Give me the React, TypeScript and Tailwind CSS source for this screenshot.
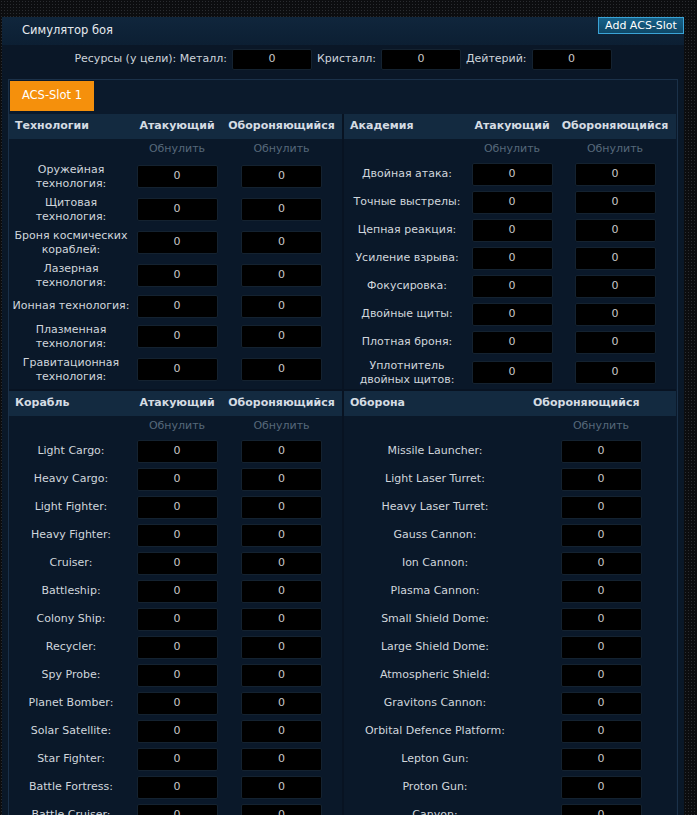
import React from 'react';

const font = "font-['DejaVu_Sans',Verdana,sans-serif]";

const tech: string[][] = [
  ['Оружейная', 'технология:'],
  ['Щитовая', 'технология:'],
  ['Броня космических', 'кораблей:'],
  ['Лазерная', 'технология:'],
  ['Ионная технология:'],
  ['Плазменная', 'технология:'],
  ['Гравитационная', 'технология:'],
];

const academy: string[][] = [
  ['Двойная атака:'],
  ['Точные выстрелы:'],
  ['Цепная реакция:'],
  ['Усиление взрыва:'],
  ['Фокусировка:'],
  ['Двойные щиты:'],
  ['Плотная броня:'],
  ['Уплотнитель', 'двойных щитов:'],
];

const ships = [
  'Light Cargo', 'Heavy Cargo', 'Light Fighter', 'Heavy Fighter', 'Cruiser', 'Battleship',
  'Colony Ship', 'Recycler', 'Spy Probe', 'Planet Bomber', 'Solar Satellite', 'Star Fighter',
  'Battle Fortress', 'Battle Cruiser',
];

const defense = [
  'Missile Launcher', 'Light Laser Turret', 'Heavy Laser Turret', 'Gauss Cannon', 'Ion Cannon',
  'Plasma Cannon', 'Small Shield Dome', 'Large Shield Dome', 'Atmospheric Shield',
  'Gravitons Cannon', 'Orbital Defence Platform', 'Lepton Gun', 'Proton Gun', 'Canyon',
];

function Field({ w = 'w-[81px]', h = 'h-[23px]' }: { w?: string; h?: string }) {
  return (
    <div
      className={`${w} ${h} bg-black border border-[#142230] rounded-[2px] flex items-center justify-center text-[#c9c9c9]`}
    >
      0
    </div>
  );
}

function Label({ lines }: { lines: string[] }) {
  return (
    <div className="flex items-center justify-center text-center leading-[14px] text-[#d0d6dc] py-[2.5px] min-h-[28px]">
      <span>
        {lines.map((l, i) => (
          <React.Fragment key={i}>
            {i > 0 && <br />}
            {l}
          </React.Fragment>
        ))}
      </span>
    </div>
  );
}

function HeadRow({ cols, title, right }: { cols: string; title: string; right: 'two' | 'one' }) {
  return (
    <div className={`grid ${cols} h-[25px] items-center bg-[#132a40] font-bold text-[#d5dce3]`}>
      <div className="pl-[6px]">{title}</div>
      {right === 'two' ? (
        <>
          <div className="text-center whitespace-nowrap">Атакующий</div>
          <div className="text-center whitespace-nowrap">Обороняющийся</div>
        </>
      ) : (
        <div className="pl-[7px] whitespace-nowrap">Обороняющийся</div>
      )}
    </div>
  );
}

function ResetRow({ cols, count }: { cols: string; count: 1 | 2 }) {
  return (
    <div className={`grid ${cols} h-[21px] items-center text-[#56687a]`}>
      <div />
      <div className="text-center">Обнулить</div>
      {count === 2 && <div className="text-center">Обнулить</div>}
    </div>
  );
}

function Table2({ cols, title, rows }: { cols: string; title: string; rows: string[][] }) {
  return (
    <div className="bg-[#0a1829]">
      <HeadRow cols={cols} title={title} right="two" />
      <ResetRow cols={cols} count={2} />
      {rows.map((r, i) => (
        <div key={i} className={`grid ${cols} items-center`}>
          <Label lines={r} />
          <div className="flex justify-center">
            <Field />
          </div>
          <div className="flex justify-center">
            <Field />
          </div>
        </div>
      ))}
    </div>
  );
}

export default function App() {
  const leftCols = 'grid-cols-[124px_88px_121px]';
  const rightCols = 'grid-cols-[126px_84px_122px]';
  const defCols = 'grid-cols-[182px_150px]';

  return (
    <div
      className={`${font} text-[11px] w-full min-h-[815px] overflow-hidden bg-[#0c0d0f] bg-[radial-gradient(#2a2c30_1px,transparent_1px)] bg-[length:3px_3px] pt-[17px]`}
    >
      <div className="ml-[2px] w-[682px] bg-[#0a1828]">
        {/* Header */}
        <div className="relative h-[28px] bg-gradient-to-b from-[#10263c] to-[#0c1f33] flex items-center pl-[20px] text-[11.5px] text-[#e6eaee]">
          Симулятор боя
          <button className="absolute right-0 top-0 h-[17px] w-[86px] bg-gradient-to-b from-[#16628a] to-[#0f4766] border border-[#3aa3d6] text-[11px] leading-[15px] text-white">
            Add ACS-Slot
          </button>
        </div>

        {/* Resources */}
        <div className="h-[34px] pb-[5px] flex items-center justify-center gap-[5px] text-[11px] text-[#cdd4db] bg-[#0a1727]">
          <span>Ресурсы (у цели): Металл:</span>
          <Field w="w-[80px]" h="h-[21px]" />
          <span>Кристалл:</span>
          <Field w="w-[80px]" h="h-[21px]" />
          <span>Дейтерий:</span>
          <Field w="w-[80px]" h="h-[21px]" />
        </div>

        {/* Tabs */}
        <div className="mx-[6px] border border-[#1b3149] bg-[#0b1a2c] pb-[2px]">
          <div className="h-[34px] flex items-start pt-[1px] pl-[1px]">
            <div className="w-[84px] h-[30px] bg-[#f5900c] flex items-center justify-center text-[11.5px] text-white">
              ACS-Slot 1
            </div>
          </div>

          <div className="flex gap-[2px] bg-[#081322] w-[667px]">
            <div className="w-[333px] bg-[#0a1829]">
              <Table2 cols={leftCols} title="Технологии" rows={tech} />
            </div>
            <div className="w-[332px] bg-[#0a1829]">
              <Table2 cols={rightCols} title="Академия" rows={academy} />
            </div>
          </div>

          <div className="flex gap-[2px] bg-[#081322] w-[667px] pt-[2px]">
            <div className="w-[333px] bg-[#0a1829]">
              <Table2 cols={leftCols} title="Корабль" rows={ships.map((s) => [s + ':'])} />
            </div>
            <div className="w-[332px] bg-[#0a1829]">
              <HeadRow cols={defCols} title="Оборона" right="one" />
              <div className={`grid ${defCols} h-[21px] items-center text-[#56687a]`}>
                <div />
                <div className="text-center">Обнулить</div>
              </div>
              {defense.map((d) => (
                <div key={d} className={`grid ${defCols} items-center`}>
                  <Label lines={[d + ':']} />
                  <div className="flex justify-center">
                    <Field />
                  </div>
                </div>
              ))}
            </div>
          </div>
        </div>
      </div>
    </div>
  );
}
